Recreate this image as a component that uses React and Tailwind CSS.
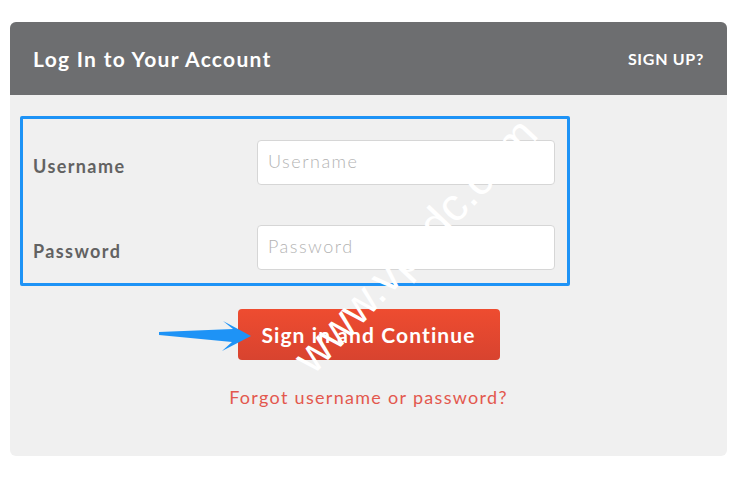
export default function App() {
  return (
    <div className="relative w-[738px] h-[480px] bg-white overflow-hidden" style={{ fontFamily: "Lato, 'Open Sans', sans-serif" }}>
      <div className="absolute left-[10px] top-[22px] w-[717px] h-[434px] rounded-md bg-[#f0f0f0] overflow-hidden flex flex-col">
        <div className="h-[73px] bg-[#6d6e70] flex items-center justify-between pl-[23px] pr-[23px]">
          <h1 className="text-white font-bold text-[21px] tracking-[1.3px]">Log In to Your Account</h1>
          <a className="text-white font-bold text-[16px] tracking-[0.7px]">SIGN UP?</a>
        </div>

        <div className="mt-[21px] ml-[10px] w-[550px] border-[3px] border-[#1e93f6] rounded-[2px] pt-[21px] pb-[13px] pl-[10px] pr-[12px] flex flex-col gap-[40px]">
          <div className="flex items-center">
            <label className="w-[224px] text-[18px] font-bold text-[#626262] tracking-[1.4px] pt-[7px]">Username</label>
            <input
              placeholder="Username"
              className="w-[298px] h-[45px] bg-white border border-[#d6d6d6] rounded-[4px] px-[10px] pb-[3px] text-[18px] font-light tracking-[1.5px] text-[#555] placeholder:text-[#b3b3b3] outline-none"
            />
          </div>
          <div className="flex items-center">
            <label className="w-[224px] text-[18px] font-bold text-[#626262] tracking-[1.4px] pt-[7px]">Password</label>
            <input
              type="password"
              placeholder="Password"
              className="w-[298px] h-[45px] bg-white border border-[#d6d6d6] rounded-[4px] px-[10px] pb-[3px] text-[18px] font-light tracking-[1.5px] text-[#555] placeholder:text-[#b3b3b3] outline-none"
            />
          </div>
        </div>

        <div className="flex flex-col items-center mt-[23px]">
          <button className="w-[262px] h-[51px] rounded-[4px] bg-gradient-to-b from-[#ee4c30] to-[#d8432f] text-white font-bold text-[21px] tracking-[1.1px]">
            Sign in and Continue
          </button>
          <a className="mt-[24px] text-[18px] text-[#e3584e] tracking-[1.3px]">Forgot username or password?</a>
        </div>
      </div>

      <svg className="absolute left-0 top-0 pointer-events-none" width="738" height="480">
        <polygon points="159,332 233,329 223,321 251,336 222,351 232,342 159,335" fill="#1e93f6" />
      </svg>

      <div
        className="absolute left-[415px] top-[245px] text-white text-[46px] whitespace-nowrap pointer-events-none leading-none"
        style={{ transform: "translate(-50%, -50%) rotate(-46.6deg)", fontFamily: "'Liberation Sans', Arial, sans-serif" }}
      >
        www.vpsdc.com
      </div>
    </div>
  );
}
